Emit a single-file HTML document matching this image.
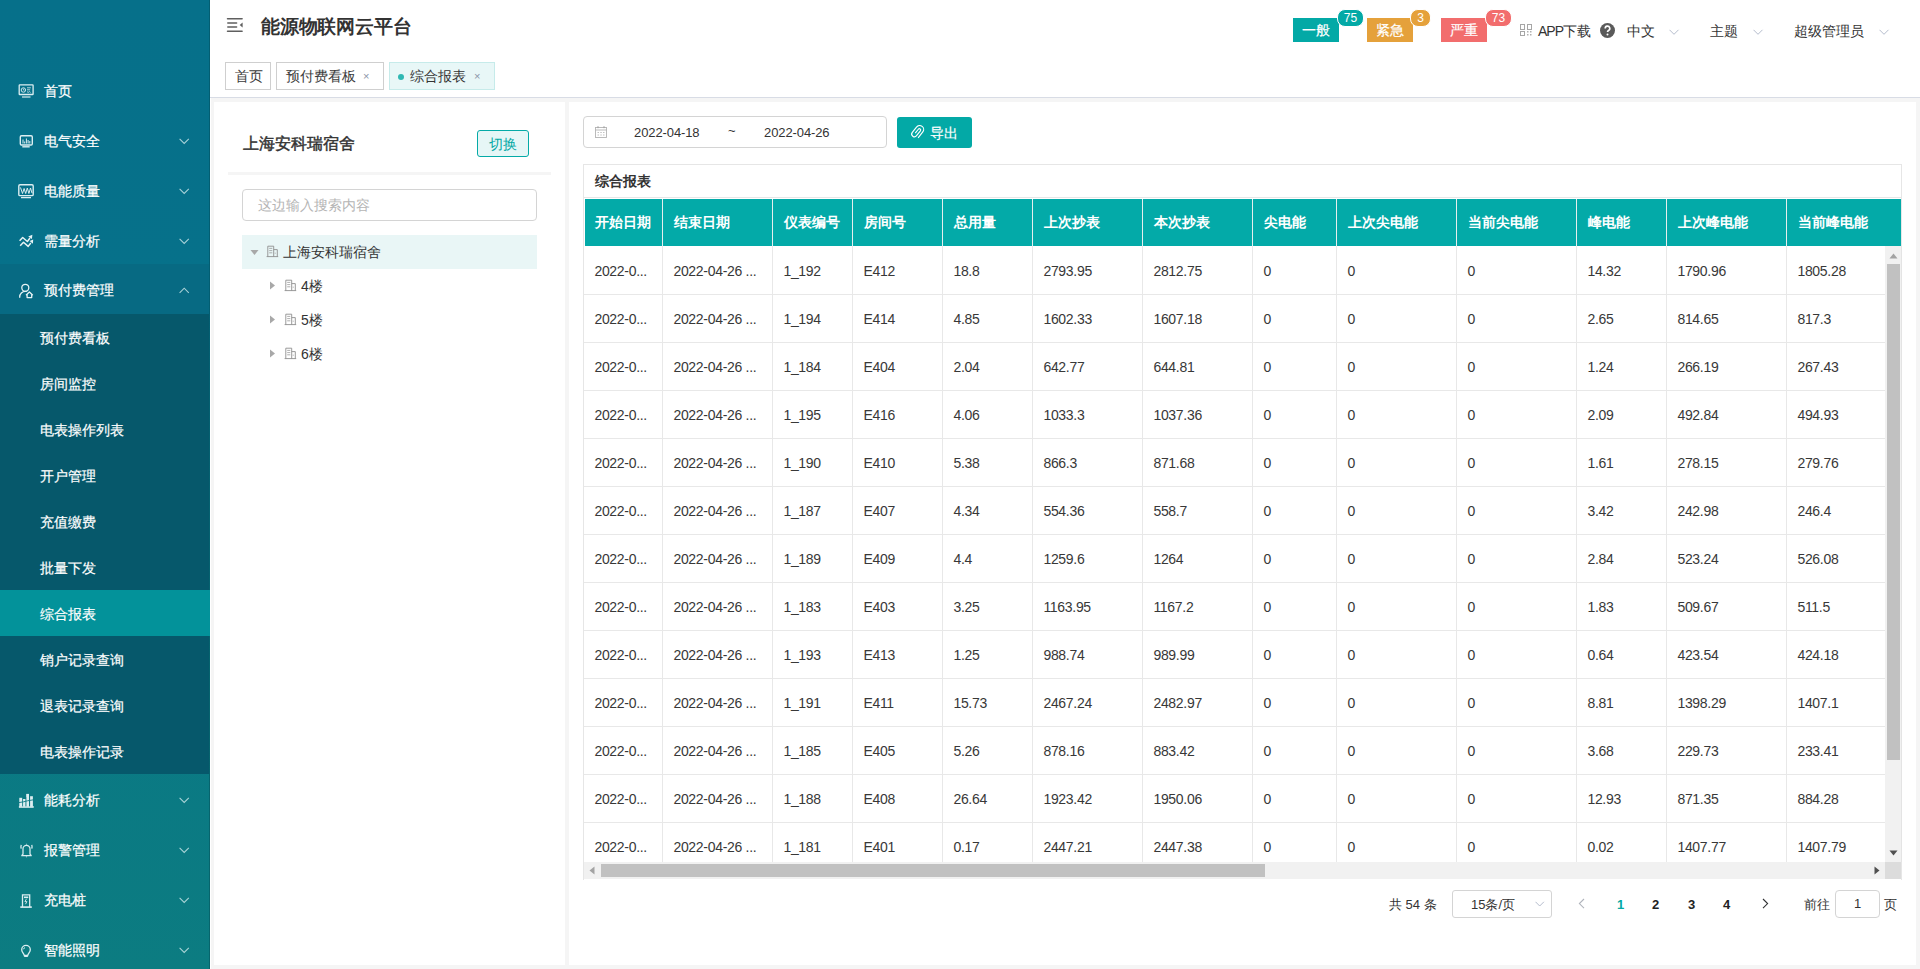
<!DOCTYPE html>
<html><head><meta charset="utf-8">
<style>
*{box-sizing:border-box;margin:0;padding:0}
html,body{width:1920px;height:969px;overflow:hidden}
body{position:relative;background:#f5f5f5;font-family:"Liberation Sans",sans-serif;font-size:14px;color:#333}
.a{position:absolute}
#sb{position:absolute;left:0;top:0;width:210px;height:969px;background:linear-gradient(180deg,#06708a 0%,#06718a 30%,#0a7984 75%,#0c7c81 100%);overflow:hidden}
#sb .edge{position:absolute;left:209px;top:0;width:1px;height:969px;background:rgba(0,60,70,.35)}
.mi{position:absolute;left:0;width:209px;height:50px;color:#fff;font-size:14px}
.mi .t{position:absolute;left:44px;top:1px;line-height:50px;white-space:nowrap;-webkit-text-stroke:0.2px #fff}
.mi svg{position:absolute;left:0;top:0}
.sub{position:absolute;left:0;top:314px;width:209px;height:460px;background:#06586b}
.si{position:absolute;left:0;width:209px;height:46px;color:#fff;font-size:14px}
.si .t{position:absolute;left:40px;top:1px;line-height:46px;white-space:nowrap;-webkit-text-stroke:0.2px #fff}
#hd{position:absolute;left:210px;top:0;width:1710px;height:98px;background:#fff;border-bottom:1px solid #d8dce5}
#wst{position:absolute;left:210px;top:98px;width:1px;height:871px;background:#fff}
#lp{position:absolute;left:214px;top:102px;width:351px;height:863px;background:#fff}
#rp{position:absolute;left:569px;top:102px;width:1347px;height:863px;background:#fff}
.tab{position:absolute;top:62px;height:28px;border:1px solid #cfcfcf;background:#fff;color:#3a3a3a;font-size:14px;line-height:26px;white-space:nowrap}
.tab .x{position:absolute;top:0;font-size:11px;color:#8a96a8}
.btn3{position:absolute;top:18px;width:46px;height:24px;color:#fff;font-size:14px;line-height:25px;text-align:center;-webkit-text-stroke:0.2px #fff}
.bdg{position:absolute;top:9px;height:18px;border-radius:8px;border:1px solid #fff;color:#fff;font-size:12px;line-height:16px;text-align:center}
.hi{position:absolute;top:19px;height:24px;line-height:24px;font-size:14px;color:#333;white-space:nowrap}
.thd{position:absolute;background:#03aaa8;overflow:hidden}
.th{position:absolute;top:0;height:47px;line-height:47px;padding-left:11px;color:#fff;font-weight:bold;font-size:14px;white-space:nowrap;overflow:hidden}
.thb{position:absolute;top:0;width:1px;height:47px;background:#e6eeee}
.tbd{position:absolute;background:#fff;overflow:hidden}
.td{position:absolute;height:47px;line-height:49px;padding-left:10.4px;color:#383838;font-size:14px;white-space:nowrap;overflow:hidden;letter-spacing:-0.3px}
.trb{position:absolute;left:0;width:1301px;height:1px;background:#e8e8e8}
.tcb{position:absolute;top:0;width:1px;height:616px;background:#e8e8e8}
.pg{position:absolute;top:891px;height:28px;line-height:28px;font-size:13px;color:#333;white-space:nowrap}

</style></head><body>
<div id="sb">
  <div class="mi" style="top:65px"><svg width="40" height="50"><rect x="19.2" y="19.9" width="13.9" height="9.6" rx="0.6" fill="none" stroke="#dceef1" stroke-width="1.3"/><circle cx="23.4" cy="25" r="2.2" fill="none" stroke="#d0e8ec" stroke-width="1"/><path d="M23.4 23.6v1.5h1.1" stroke="#d0e8ec" stroke-width="0.8" fill="none"/><path d="M27 22.8h3.8M27 24.8h3.2M27 26.6l1.2 .8 1.2-.8 1.2.8" stroke="#c6e2e6" stroke-width="0.9" fill="none"/><rect x="22" y="31.3" width="8.5" height="1.4" fill="#b9dbe0"/></svg><span class="t">首页</span></div>
  <div class="mi" style="top:115px"><svg width="40" height="50"><rect x="20.3" y="20.7" width="12" height="9.3" rx="1.2" fill="none" stroke="#dceef1" stroke-width="1.4"/><path d="M23 28.5v-4M24.7 28.5v-2M26.4 28.5v-5M28.1 28.5v-3.5M29.8 28.5v-2.5" stroke="#dceef1" stroke-width="1"/><path d="M22.3 31.8h7.4" stroke="#dceef1" stroke-width="1.4"/></svg><span class="t">电气安全</span><svg style="left:179px;top:23px" width="11" height="7"><path d="M0.6 0.8l4.6 4.6 4.6-4.6" fill="none" stroke="rgba(220,240,242,.75)" stroke-width="1.1"/></svg></div>
  <div class="mi" style="top:165px"><svg width="40" height="50"><rect x="18.8" y="19.8" width="14.4" height="10.8" rx="1.2" fill="none" stroke="#dceef1" stroke-width="1.4"/><path d="M20.5 22.5l2 6 1.6-5 1.6 5 1.6-5.5 1.6 5.5 1.6-5.5 1.5 5" fill="none" stroke="#dceef1" stroke-width="1"/><path d="M21 32.6h10" stroke="#dceef1" stroke-width="1.3"/></svg><span class="t">电能质量</span><svg style="left:179px;top:23px" width="11" height="7"><path d="M0.6 0.8l4.6 4.6 4.6-4.6" fill="none" stroke="rgba(220,240,242,.75)" stroke-width="1.1"/></svg></div>
  <div class="mi" style="top:215px"><svg width="40" height="50"><g fill="none" stroke="#e6f3f5" stroke-width="1.5" stroke-linejoin="round"><path d="M19.6 25.8L22.7 22.5L27.4 26.5L30 23"/><path d="M20.2 30.8L23.5 27.3L28.2 31.4L30.8 28"/></g><path d="M32.4 19.8L28.2 21.4L31.9 24z M33.2 24.6L29.6 26.1L32.9 28.7z" fill="#e6f3f5"/></svg><span class="t">需量分析</span><svg style="left:179px;top:23px" width="11" height="7"><path d="M0.6 0.8l4.6 4.6 4.6-4.6" fill="none" stroke="rgba(220,240,242,.75)" stroke-width="1.1"/></svg></div>
  <div class="mi" style="top:264px;background:#076a83"><svg width="40" height="50"><g fill="none" stroke="#e6f3f5" stroke-width="1.3" stroke-linejoin="round"><circle cx="25.3" cy="23.8" r="3.5"/><path d="M19.7 33.7v-.8a5.6 5.6 0 0 1 5.6-5.6h1.4"/><path d="M26 31.2L29.4 28L32.8 31.2M27.1 30.4v3.2h4.6v-3.2"/></g></svg><span class="t">预付费管理</span><svg style="left:179px;top:23px" width="11" height="7"><path d="M0.6 5.8l4.6-4.6 4.6 4.6" fill="none" stroke="rgba(220,240,242,.75)" stroke-width="1.1"/></svg></div>
  <div class="sub">
    <div class="si" style="top:0"><span class="t">预付费看板</span></div>
    <div class="si" style="top:46px"><span class="t">房间监控</span></div>
    <div class="si" style="top:92px"><span class="t">电表操作列表</span></div>
    <div class="si" style="top:138px"><span class="t">开户管理</span></div>
    <div class="si" style="top:184px"><span class="t">充值缴费</span></div>
    <div class="si" style="top:230px"><span class="t">批量下发</span></div>
    <div class="si" style="top:276px;background:#03929a;width:210px;z-index:2"><span class="t">综合报表</span></div>
    <div class="si" style="top:322px"><span class="t">销户记录查询</span></div>
    <div class="si" style="top:368px"><span class="t">退表记录查询</span></div>
    <div class="si" style="top:414px"><span class="t">电表操作记录</span></div>
  </div>
  <div class="mi" style="top:774px"><svg width="40" height="50"><g fill="#dceef1"><rect x="19.3" y="23.8" width="3.1" height="8.6"/><rect x="22.9" y="25" width="2.8" height="7.4"/><rect x="26.2" y="19.9" width="2.8" height="12.5"/><rect x="30.1" y="22.2" width="2.8" height="10.2"/><rect x="18.9" y="32.1" width="14.8" height="1.7"/></g><path d="M18.8 28.6L23.5 27.8L27.5 26.8L33.5 25.8" stroke="#0a7983" stroke-width="0.9" fill="none"/><path d="M22.6 23v9.5M25.9 23v9.5M29.5 19v13.5" stroke="#0a7983" stroke-width="0.6"/></svg><span class="t">能耗分析</span><svg style="left:179px;top:23px" width="11" height="7"><path d="M0.6 0.8l4.6 4.6 4.6-4.6" fill="none" stroke="rgba(220,240,242,.75)" stroke-width="1.1"/></svg></div>
  <div class="mi" style="top:824px"><svg width="40" height="50"><g fill="none" stroke="#dceef1" stroke-width="1.25"><path d="M23 30.6V24.8a3.5 3.5 0 0 1 7 0v5.8"/><path d="M21.3 31.6h10.4M23 30.3l-1.5 1.3M30 30.3l1.5 1.3"/><path d="M21.2 20.8q-.5 1.8 0 3.8M31.8 20.8q.5 1.8 0 3.8"/></g><path d="M26.5 19.6l.7 1h-1.4z M25.6 32.4h1.8l-.9 1.2z" fill="#dceef1"/></svg><span class="t">报警管理</span><svg style="left:179px;top:23px" width="11" height="7"><path d="M0.6 0.8l4.6 4.6 4.6-4.6" fill="none" stroke="rgba(220,240,242,.75)" stroke-width="1.1"/></svg></div>
  <div class="mi" style="top:874px"><svg width="40" height="50"><g fill="none" stroke="#dceef1" stroke-width="1.3"><path d="M22.5 33v-12.2h7.2v12.2"/></g><rect x="24" y="22.5" width="4.3" height="1.6" fill="#dceef1"/><path d="M26.5 24.8l-1.6 2.8h2l-1.4 2.6" stroke="#dceef1" stroke-width="0.9" fill="none"/><rect x="20.3" y="32.3" width="11.5" height="1.6" fill="#dceef1"/></svg><span class="t">充电桩</span><svg style="left:179px;top:23px" width="11" height="7"><path d="M0.6 0.8l4.6 4.6 4.6-4.6" fill="none" stroke="rgba(220,240,242,.75)" stroke-width="1.1"/></svg></div>
  <div class="mi" style="top:924px"><svg width="40" height="50"><path d="M24.3 31.5c-.3-2-2.6-3.2-2.6-5.8a4.3 4.3 0 0 1 8.6 0c0 2.6-2.3 3.8-2.6 5.8z" fill="none" stroke="#dceef1" stroke-width="1.3"/><rect x="24.2" y="31" width="3.6" height="2" fill="#dceef1"/><path d="M23.4 25.3a2 2 0 0 1 1.6-1.6" stroke="#dceef1" stroke-width="1" fill="none"/></svg><span class="t">智能照明</span><svg style="left:179px;top:23px" width="11" height="7"><path d="M0.6 0.8l4.6 4.6 4.6-4.6" fill="none" stroke="rgba(220,240,242,.75)" stroke-width="1.1"/></svg></div>
  <div class="edge"></div>
</div>

<div id="hd">
  <svg class="a" style="left:16px;top:16px" width="20" height="18"><g stroke="#5f5f5f" stroke-width="1.5" stroke-linecap="round"><path d="M1.5 2.8h14.6M1.5 15.2h14.6M1.8 7h8.8M1.8 11h8.8"/></g><path d="M16.6 6.6v4.8l-2.9-2.4z" fill="#5f5f5f"/></svg>
  <div class="a" style="left:51px;top:11px;height:32px;line-height:32px;font-size:19px;font-weight:bold;color:#333;white-space:nowrap;letter-spacing:-0.2px">能源物联网云平台</div>
</div>
<div class="tab" style="left:225px;width:46px;padding-left:9px">首页</div>
<div class="tab" style="left:276px;width:108px;padding-left:9px">预付费看板<span class="x" style="left:86px">×</span></div>
<div class="tab" style="left:389px;width:106px;padding-left:20px;background:#e8f7f7;border-color:#c6ebea;color:#333">综合报表<span class="x" style="left:84px">×</span><span class="a" style="left:8px;top:11px;width:6px;height:6px;border-radius:3px;background:#2fb8b3"></span></div>

<div class="btn3" style="left:1293px;background:#03a9a6">一般</div>
<div class="bdg" style="left:1337px;width:27px;background:#03a9a6">75</div>
<div class="btn3" style="left:1367px;background:#e5a13b">紧急</div>
<div class="bdg" style="left:1410px;width:21px;background:#e5a13b">3</div>
<div class="btn3" style="left:1441px;background:#f26d6d">严重</div>
<div class="bdg" style="left:1485px;width:27px;background:#f26d6d">73</div>
<svg class="a" style="left:1519px;top:23px" width="14" height="14"><g fill="none" stroke="#a6a6a6" stroke-width="1"><rect x="1.5" y="1.5" width="4" height="5"/><rect x="8.5" y="1.5" width="4" height="5"/><rect x="1.5" y="8.5" width="4" height="4"/></g><g fill="#b0b0b0"><rect x="8" y="8" width="1.5" height="1.5"/><rect x="11" y="8" width="1.5" height="1.5"/><rect x="8" y="11" width="1.5" height="1.5"/><rect x="11" y="11" width="1.5" height="1.5"/></g></svg>
<div class="hi" style="left:1538px"><span style="letter-spacing:-1px">APP</span>下载</div>
<svg class="a" style="left:1599px;top:22px" width="17" height="17"><circle cx="8.5" cy="8.5" r="7.5" fill="#5a5a5a"/><path d="M6.2 6.5a2.3 2.3 0 1 1 3.3 2c-.7.4-1 .8-1 1.6" fill="none" stroke="#fff" stroke-width="1.6"/><circle cx="8.5" cy="12.5" r="1" fill="#fff"/></svg>
<div class="hi" style="left:1627px">中文</div>
<svg class="a" style="left:1669px;top:29px" width="11" height="7"><path d="M0.5 0.8l4.5 4.5 4.5-4.5" fill="none" stroke="#b4bccc" stroke-width="1"/></svg>
<div class="hi" style="left:1710px">主题</div>
<svg class="a" style="left:1753px;top:29px" width="11" height="7"><path d="M0.5 0.8l4.5 4.5 4.5-4.5" fill="none" stroke="#b4bccc" stroke-width="1"/></svg>
<div class="hi" style="left:1794px">超级管理员</div>
<svg class="a" style="left:1879px;top:29px" width="11" height="7"><path d="M0.5 0.8l4.5 4.5 4.5-4.5" fill="none" stroke="#b4bccc" stroke-width="1"/></svg>

<div id="wst"></div>
<div id="lp">
  <div class="a" style="left:29px;top:29px;height:26px;line-height:26px;font-size:16px;font-weight:normal;color:#333;white-space:nowrap;-webkit-text-stroke:0.45px #333">上海安科瑞宿舍</div>
  <div class="a" style="left:263px;top:28px;width:52px;height:27px;border:1px solid #05aaa7;border-radius:3px;background:#e6f6f6;color:#05a8a5;font-size:14px;line-height:27px;text-align:center">切换</div>
  <div class="a" style="left:14px;top:70px;width:323px;height:3px;background:#f5f5f5"></div>
  <div class="a" style="left:28px;top:87px;width:295px;height:32px;border:1px solid #d4d4d4;border-radius:4px;color:#b5b5b5;font-size:14px;line-height:30px;padding-left:15px;white-space:nowrap">这边输入搜索内容</div>
  <div class="a" style="left:28px;top:133px;width:295px;height:34px;background:#e9f6f6"></div>
  <svg class="a" style="left:36px;top:147px" width="10" height="8"><path d="M0.5 1h8l-4 5z" fill="#a8a8a8"/></svg>
  <svg class="a" style="left:52px;top:143px" width="14" height="14"><g fill="none" stroke="#8f8f8f" stroke-width="0.9"><path d="M0.6 11.6h11.6M1.8 11.6V1.2h5.9v10.4M7.7 4.6h3.6v7"/></g><g stroke="#9a9a9a" stroke-width="0.8"><path d="M3.2 3.4h3.1M3.2 5.6h3.1M3.2 7.8h3.1"/></g><path d="M9.2 7.5v1.5" stroke="#b5b5b5" stroke-width="0.8"/></svg>
  <div class="a" style="left:69px;top:133px;height:34px;line-height:34px;font-size:14px;color:#333;white-space:nowrap">上海安科瑞宿舍</div>
  <svg class="a" style="left:55px;top:179px" width="8" height="10"><path d="M1 0.5v8l5-4z" fill="#a8a8a8"/></svg>
  <svg class="a" style="left:70px;top:177px" width="14" height="14"><g fill="none" stroke="#8f8f8f" stroke-width="0.9"><path d="M0.6 11.6h11.6M1.8 11.6V1.2h5.9v10.4M7.7 4.6h3.6v7"/></g><g stroke="#9a9a9a" stroke-width="0.8"><path d="M3.2 3.4h3.1M3.2 5.6h3.1M3.2 7.8h3.1"/></g><path d="M9.2 7.5v1.5" stroke="#b5b5b5" stroke-width="0.8"/></svg>
  <div class="a" style="left:87px;top:167px;height:34px;line-height:34px;font-size:14px;color:#333;white-space:nowrap">4楼</div>
  <svg class="a" style="left:55px;top:213px" width="8" height="10"><path d="M1 0.5v8l5-4z" fill="#a8a8a8"/></svg>
  <svg class="a" style="left:70px;top:211px" width="14" height="14"><g fill="none" stroke="#8f8f8f" stroke-width="0.9"><path d="M0.6 11.6h11.6M1.8 11.6V1.2h5.9v10.4M7.7 4.6h3.6v7"/></g><g stroke="#9a9a9a" stroke-width="0.8"><path d="M3.2 3.4h3.1M3.2 5.6h3.1M3.2 7.8h3.1"/></g><path d="M9.2 7.5v1.5" stroke="#b5b5b5" stroke-width="0.8"/></svg>
  <div class="a" style="left:87px;top:201px;height:34px;line-height:34px;font-size:14px;color:#333;white-space:nowrap">5楼</div>
  <svg class="a" style="left:55px;top:247px" width="8" height="10"><path d="M1 0.5v8l5-4z" fill="#a8a8a8"/></svg>
  <svg class="a" style="left:70px;top:245px" width="14" height="14"><g fill="none" stroke="#8f8f8f" stroke-width="0.9"><path d="M0.6 11.6h11.6M1.8 11.6V1.2h5.9v10.4M7.7 4.6h3.6v7"/></g><g stroke="#9a9a9a" stroke-width="0.8"><path d="M3.2 3.4h3.1M3.2 5.6h3.1M3.2 7.8h3.1"/></g><path d="M9.2 7.5v1.5" stroke="#b5b5b5" stroke-width="0.8"/></svg>
  <div class="a" style="left:87px;top:235px;height:34px;line-height:34px;font-size:14px;color:#333;white-space:nowrap">6楼</div>
</div>

<div id="rp">
  <div class="a" style="left:14px;top:14px;width:304px;height:32px;border:1px solid #d4d4d4;border-radius:4px"></div>
  <svg class="a" style="left:25px;top:23px" width="14" height="14"><g fill="none" stroke="#b3b3b3" stroke-width="0.9"><rect x="1.5" y="2.5" width="11" height="10"/><path d="M1.5 5h11"/></g><path d="M4 1.2v2M10 1.2v2" stroke="#9a9a9a" stroke-width="0.9"/><g fill="#c2c2c2"><rect x="3.5" y="7" width="1.5" height="1"/><rect x="6.3" y="7" width="1.5" height="1"/><rect x="9" y="7" width="1.5" height="1"/><rect x="3.5" y="9.5" width="1.5" height="1"/><rect x="6.3" y="9.5" width="1.5" height="1"/><rect x="9" y="9.5" width="1.5" height="1"/></g></svg>
  <div class="a" style="left:65px;top:15px;line-height:32px;font-size:13px;color:#333;letter-spacing:-0.1px">2022-04-18</div>
  <div class="a" style="left:159px;top:14px;line-height:30px;font-size:13px;color:#333">~</div>
  <div class="a" style="left:195px;top:15px;line-height:32px;font-size:13px;color:#333;letter-spacing:-0.1px">2022-04-26</div>
  <div class="a" style="left:328px;top:15px;width:75px;height:31px;border-radius:3px;background:#03a9a6"></div>
  <svg class="a" style="left:340px;top:22px" width="16" height="16"><g transform="translate(8.2,8.8) rotate(-52)" fill="none" stroke="#fff" stroke-width="1.15"><path d="M-1.5 -1.3h5a1.3 1.3 0 0 1 0 2.6h-6.2a2.7 2.7 0 0 1 0-5.4h6.8a4 4 0 0 1 0 8h-7.6"/></g></svg>
  <div class="a" style="left:361px;top:16px;line-height:31px;font-size:14px;color:#fff;-webkit-text-stroke:0.2px #fff">导出</div>
  <!-- table frame -->
  <div class="a" style="left:14px;top:62px;width:1319px;height:716px;border:1px solid #e6e6e6;border-bottom:none"></div>
  <div class="a" style="left:26px;top:63px;line-height:33px;font-size:14px;font-weight:bold;color:#333">综合报表</div>
  <div class="a" style="left:15px;top:95px;width:1317px;height:1px;background:#e6e6e6"></div>
</div>
<div class="thd" style="left:585px;top:199px;width:1316px;height:47px">
<div class="th" style="left:-1px;width:78px">开始日期</div>
<div class="thb" style="left:77px"></div>
<div class="th" style="left:78px;width:109px">结束日期</div>
<div class="thb" style="left:187px"></div>
<div class="th" style="left:188px;width:79px">仪表编号</div>
<div class="thb" style="left:267px"></div>
<div class="th" style="left:268px;width:89px">房间号</div>
<div class="thb" style="left:357px"></div>
<div class="th" style="left:358px;width:89px">总用量</div>
<div class="thb" style="left:447px"></div>
<div class="th" style="left:448px;width:109px">上次抄表</div>
<div class="thb" style="left:557px"></div>
<div class="th" style="left:558px;width:109px">本次抄表</div>
<div class="thb" style="left:667px"></div>
<div class="th" style="left:668px;width:83px">尖电能</div>
<div class="thb" style="left:751px"></div>
<div class="th" style="left:752px;width:119px">上次尖电能</div>
<div class="thb" style="left:871px"></div>
<div class="th" style="left:872px;width:119px">当前尖电能</div>
<div class="thb" style="left:991px"></div>
<div class="th" style="left:992px;width:89px">峰电能</div>
<div class="thb" style="left:1081px"></div>
<div class="th" style="left:1082px;width:119px">上次峰电能</div>
<div class="thb" style="left:1201px"></div>
<div class="th" style="left:1202px;width:119px">当前峰电能</div>
</div>
<div class="tbd" style="left:584px;top:246px;width:1301px;height:616px">
<div class="td" style="left:0px;top:1px;width:78px">2022-0...</div>
<div class="td" style="left:79px;top:1px;width:109px">2022-04-26 ...</div>
<div class="td" style="left:189px;top:1px;width:79px">1_192</div>
<div class="td" style="left:269px;top:1px;width:89px">E412</div>
<div class="td" style="left:359px;top:1px;width:89px">18.8</div>
<div class="td" style="left:449px;top:1px;width:109px">2793.95</div>
<div class="td" style="left:559px;top:1px;width:109px">2812.75</div>
<div class="td" style="left:669px;top:1px;width:83px">0</div>
<div class="td" style="left:753px;top:1px;width:119px">0</div>
<div class="td" style="left:873px;top:1px;width:119px">0</div>
<div class="td" style="left:993px;top:1px;width:89px">14.32</div>
<div class="td" style="left:1083px;top:1px;width:119px">1790.96</div>
<div class="td" style="left:1203px;top:1px;width:119px">1805.28</div>
<div class="trb" style="top:48px"></div>
<div class="td" style="left:0px;top:49px;width:78px">2022-0...</div>
<div class="td" style="left:79px;top:49px;width:109px">2022-04-26 ...</div>
<div class="td" style="left:189px;top:49px;width:79px">1_194</div>
<div class="td" style="left:269px;top:49px;width:89px">E414</div>
<div class="td" style="left:359px;top:49px;width:89px">4.85</div>
<div class="td" style="left:449px;top:49px;width:109px">1602.33</div>
<div class="td" style="left:559px;top:49px;width:109px">1607.18</div>
<div class="td" style="left:669px;top:49px;width:83px">0</div>
<div class="td" style="left:753px;top:49px;width:119px">0</div>
<div class="td" style="left:873px;top:49px;width:119px">0</div>
<div class="td" style="left:993px;top:49px;width:89px">2.65</div>
<div class="td" style="left:1083px;top:49px;width:119px">814.65</div>
<div class="td" style="left:1203px;top:49px;width:119px">817.3</div>
<div class="trb" style="top:96px"></div>
<div class="td" style="left:0px;top:97px;width:78px">2022-0...</div>
<div class="td" style="left:79px;top:97px;width:109px">2022-04-26 ...</div>
<div class="td" style="left:189px;top:97px;width:79px">1_184</div>
<div class="td" style="left:269px;top:97px;width:89px">E404</div>
<div class="td" style="left:359px;top:97px;width:89px">2.04</div>
<div class="td" style="left:449px;top:97px;width:109px">642.77</div>
<div class="td" style="left:559px;top:97px;width:109px">644.81</div>
<div class="td" style="left:669px;top:97px;width:83px">0</div>
<div class="td" style="left:753px;top:97px;width:119px">0</div>
<div class="td" style="left:873px;top:97px;width:119px">0</div>
<div class="td" style="left:993px;top:97px;width:89px">1.24</div>
<div class="td" style="left:1083px;top:97px;width:119px">266.19</div>
<div class="td" style="left:1203px;top:97px;width:119px">267.43</div>
<div class="trb" style="top:144px"></div>
<div class="td" style="left:0px;top:145px;width:78px">2022-0...</div>
<div class="td" style="left:79px;top:145px;width:109px">2022-04-26 ...</div>
<div class="td" style="left:189px;top:145px;width:79px">1_195</div>
<div class="td" style="left:269px;top:145px;width:89px">E416</div>
<div class="td" style="left:359px;top:145px;width:89px">4.06</div>
<div class="td" style="left:449px;top:145px;width:109px">1033.3</div>
<div class="td" style="left:559px;top:145px;width:109px">1037.36</div>
<div class="td" style="left:669px;top:145px;width:83px">0</div>
<div class="td" style="left:753px;top:145px;width:119px">0</div>
<div class="td" style="left:873px;top:145px;width:119px">0</div>
<div class="td" style="left:993px;top:145px;width:89px">2.09</div>
<div class="td" style="left:1083px;top:145px;width:119px">492.84</div>
<div class="td" style="left:1203px;top:145px;width:119px">494.93</div>
<div class="trb" style="top:192px"></div>
<div class="td" style="left:0px;top:193px;width:78px">2022-0...</div>
<div class="td" style="left:79px;top:193px;width:109px">2022-04-26 ...</div>
<div class="td" style="left:189px;top:193px;width:79px">1_190</div>
<div class="td" style="left:269px;top:193px;width:89px">E410</div>
<div class="td" style="left:359px;top:193px;width:89px">5.38</div>
<div class="td" style="left:449px;top:193px;width:109px">866.3</div>
<div class="td" style="left:559px;top:193px;width:109px">871.68</div>
<div class="td" style="left:669px;top:193px;width:83px">0</div>
<div class="td" style="left:753px;top:193px;width:119px">0</div>
<div class="td" style="left:873px;top:193px;width:119px">0</div>
<div class="td" style="left:993px;top:193px;width:89px">1.61</div>
<div class="td" style="left:1083px;top:193px;width:119px">278.15</div>
<div class="td" style="left:1203px;top:193px;width:119px">279.76</div>
<div class="trb" style="top:240px"></div>
<div class="td" style="left:0px;top:241px;width:78px">2022-0...</div>
<div class="td" style="left:79px;top:241px;width:109px">2022-04-26 ...</div>
<div class="td" style="left:189px;top:241px;width:79px">1_187</div>
<div class="td" style="left:269px;top:241px;width:89px">E407</div>
<div class="td" style="left:359px;top:241px;width:89px">4.34</div>
<div class="td" style="left:449px;top:241px;width:109px">554.36</div>
<div class="td" style="left:559px;top:241px;width:109px">558.7</div>
<div class="td" style="left:669px;top:241px;width:83px">0</div>
<div class="td" style="left:753px;top:241px;width:119px">0</div>
<div class="td" style="left:873px;top:241px;width:119px">0</div>
<div class="td" style="left:993px;top:241px;width:89px">3.42</div>
<div class="td" style="left:1083px;top:241px;width:119px">242.98</div>
<div class="td" style="left:1203px;top:241px;width:119px">246.4</div>
<div class="trb" style="top:288px"></div>
<div class="td" style="left:0px;top:289px;width:78px">2022-0...</div>
<div class="td" style="left:79px;top:289px;width:109px">2022-04-26 ...</div>
<div class="td" style="left:189px;top:289px;width:79px">1_189</div>
<div class="td" style="left:269px;top:289px;width:89px">E409</div>
<div class="td" style="left:359px;top:289px;width:89px">4.4</div>
<div class="td" style="left:449px;top:289px;width:109px">1259.6</div>
<div class="td" style="left:559px;top:289px;width:109px">1264</div>
<div class="td" style="left:669px;top:289px;width:83px">0</div>
<div class="td" style="left:753px;top:289px;width:119px">0</div>
<div class="td" style="left:873px;top:289px;width:119px">0</div>
<div class="td" style="left:993px;top:289px;width:89px">2.84</div>
<div class="td" style="left:1083px;top:289px;width:119px">523.24</div>
<div class="td" style="left:1203px;top:289px;width:119px">526.08</div>
<div class="trb" style="top:336px"></div>
<div class="td" style="left:0px;top:337px;width:78px">2022-0...</div>
<div class="td" style="left:79px;top:337px;width:109px">2022-04-26 ...</div>
<div class="td" style="left:189px;top:337px;width:79px">1_183</div>
<div class="td" style="left:269px;top:337px;width:89px">E403</div>
<div class="td" style="left:359px;top:337px;width:89px">3.25</div>
<div class="td" style="left:449px;top:337px;width:109px">1163.95</div>
<div class="td" style="left:559px;top:337px;width:109px">1167.2</div>
<div class="td" style="left:669px;top:337px;width:83px">0</div>
<div class="td" style="left:753px;top:337px;width:119px">0</div>
<div class="td" style="left:873px;top:337px;width:119px">0</div>
<div class="td" style="left:993px;top:337px;width:89px">1.83</div>
<div class="td" style="left:1083px;top:337px;width:119px">509.67</div>
<div class="td" style="left:1203px;top:337px;width:119px">511.5</div>
<div class="trb" style="top:384px"></div>
<div class="td" style="left:0px;top:385px;width:78px">2022-0...</div>
<div class="td" style="left:79px;top:385px;width:109px">2022-04-26 ...</div>
<div class="td" style="left:189px;top:385px;width:79px">1_193</div>
<div class="td" style="left:269px;top:385px;width:89px">E413</div>
<div class="td" style="left:359px;top:385px;width:89px">1.25</div>
<div class="td" style="left:449px;top:385px;width:109px">988.74</div>
<div class="td" style="left:559px;top:385px;width:109px">989.99</div>
<div class="td" style="left:669px;top:385px;width:83px">0</div>
<div class="td" style="left:753px;top:385px;width:119px">0</div>
<div class="td" style="left:873px;top:385px;width:119px">0</div>
<div class="td" style="left:993px;top:385px;width:89px">0.64</div>
<div class="td" style="left:1083px;top:385px;width:119px">423.54</div>
<div class="td" style="left:1203px;top:385px;width:119px">424.18</div>
<div class="trb" style="top:432px"></div>
<div class="td" style="left:0px;top:433px;width:78px">2022-0...</div>
<div class="td" style="left:79px;top:433px;width:109px">2022-04-26 ...</div>
<div class="td" style="left:189px;top:433px;width:79px">1_191</div>
<div class="td" style="left:269px;top:433px;width:89px">E411</div>
<div class="td" style="left:359px;top:433px;width:89px">15.73</div>
<div class="td" style="left:449px;top:433px;width:109px">2467.24</div>
<div class="td" style="left:559px;top:433px;width:109px">2482.97</div>
<div class="td" style="left:669px;top:433px;width:83px">0</div>
<div class="td" style="left:753px;top:433px;width:119px">0</div>
<div class="td" style="left:873px;top:433px;width:119px">0</div>
<div class="td" style="left:993px;top:433px;width:89px">8.81</div>
<div class="td" style="left:1083px;top:433px;width:119px">1398.29</div>
<div class="td" style="left:1203px;top:433px;width:119px">1407.1</div>
<div class="trb" style="top:480px"></div>
<div class="td" style="left:0px;top:481px;width:78px">2022-0...</div>
<div class="td" style="left:79px;top:481px;width:109px">2022-04-26 ...</div>
<div class="td" style="left:189px;top:481px;width:79px">1_185</div>
<div class="td" style="left:269px;top:481px;width:89px">E405</div>
<div class="td" style="left:359px;top:481px;width:89px">5.26</div>
<div class="td" style="left:449px;top:481px;width:109px">878.16</div>
<div class="td" style="left:559px;top:481px;width:109px">883.42</div>
<div class="td" style="left:669px;top:481px;width:83px">0</div>
<div class="td" style="left:753px;top:481px;width:119px">0</div>
<div class="td" style="left:873px;top:481px;width:119px">0</div>
<div class="td" style="left:993px;top:481px;width:89px">3.68</div>
<div class="td" style="left:1083px;top:481px;width:119px">229.73</div>
<div class="td" style="left:1203px;top:481px;width:119px">233.41</div>
<div class="trb" style="top:528px"></div>
<div class="td" style="left:0px;top:529px;width:78px">2022-0...</div>
<div class="td" style="left:79px;top:529px;width:109px">2022-04-26 ...</div>
<div class="td" style="left:189px;top:529px;width:79px">1_188</div>
<div class="td" style="left:269px;top:529px;width:89px">E408</div>
<div class="td" style="left:359px;top:529px;width:89px">26.64</div>
<div class="td" style="left:449px;top:529px;width:109px">1923.42</div>
<div class="td" style="left:559px;top:529px;width:109px">1950.06</div>
<div class="td" style="left:669px;top:529px;width:83px">0</div>
<div class="td" style="left:753px;top:529px;width:119px">0</div>
<div class="td" style="left:873px;top:529px;width:119px">0</div>
<div class="td" style="left:993px;top:529px;width:89px">12.93</div>
<div class="td" style="left:1083px;top:529px;width:119px">871.35</div>
<div class="td" style="left:1203px;top:529px;width:119px">884.28</div>
<div class="trb" style="top:576px"></div>
<div class="td" style="left:0px;top:577px;width:78px">2022-0...</div>
<div class="td" style="left:79px;top:577px;width:109px">2022-04-26 ...</div>
<div class="td" style="left:189px;top:577px;width:79px">1_181</div>
<div class="td" style="left:269px;top:577px;width:89px">E401</div>
<div class="td" style="left:359px;top:577px;width:89px">0.17</div>
<div class="td" style="left:449px;top:577px;width:109px">2447.21</div>
<div class="td" style="left:559px;top:577px;width:109px">2447.38</div>
<div class="td" style="left:669px;top:577px;width:83px">0</div>
<div class="td" style="left:753px;top:577px;width:119px">0</div>
<div class="td" style="left:873px;top:577px;width:119px">0</div>
<div class="td" style="left:993px;top:577px;width:89px">0.02</div>
<div class="td" style="left:1083px;top:577px;width:119px">1407.77</div>
<div class="td" style="left:1203px;top:577px;width:119px">1407.79</div>
<div class="trb" style="top:624px"></div>
<div class="tcb" style="left:78px"></div>
<div class="tcb" style="left:188px"></div>
<div class="tcb" style="left:268px"></div>
<div class="tcb" style="left:358px"></div>
<div class="tcb" style="left:448px"></div>
<div class="tcb" style="left:558px"></div>
<div class="tcb" style="left:668px"></div>
<div class="tcb" style="left:752px"></div>
<div class="tcb" style="left:872px"></div>
<div class="tcb" style="left:992px"></div>
<div class="tcb" style="left:1082px"></div>
<div class="tcb" style="left:1202px"></div>
<div class="tcb" style="left:1322px"></div>
</div>
<!-- scrollbars -->
<div class="a" style="left:1885px;top:246px;width:17px;height:616px;background:#f1f1f1;border-right:1px solid #e4e4e4"></div>
<svg class="a" style="left:1889px;top:253px" width="9" height="6"><path d="M0.5 5.5h8l-4-5z" fill="#a3a3a3"/></svg>
<div class="a" style="left:1887px;top:264px;width:13px;height:496px;background:#c1c1c1"></div>
<svg class="a" style="left:1889px;top:850px" width="9" height="6"><path d="M0.5 0.5h8l-4 5z" fill="#505050"/></svg>
<div class="a" style="left:584px;top:862px;width:1301px;height:17px;background:#f1f1f1"></div>
<div class="a" style="left:601px;top:864px;width:664px;height:13px;background:#c1c1c1"></div>
<svg class="a" style="left:589px;top:866px" width="6" height="9"><path d="M5.5 0.5v8l-5-4z" fill="#a3a3a3"/></svg>
<svg class="a" style="left:1874px;top:866px" width="6" height="9"><path d="M0.5 0.5v8l5-4z" fill="#505050"/></svg>
<div class="a" style="left:1885px;top:862px;width:16px;height:17px;background:#dcdcdc"></div>
<!-- pagination -->
<div class="pg" style="left:1389px">共 54 条</div>
<div class="a" style="left:1452px;top:890px;width:100px;height:28px;border:1px solid #d4d4d4;border-radius:3px"></div>
<div class="pg" style="left:1471px">15条/页</div>
<svg class="a" style="left:1535px;top:901px" width="10" height="7"><path d="M0.5 0.8l4.2 4.2 4.2-4.2" fill="none" stroke="#b4bccc" stroke-width="1"/></svg>
<svg class="a" style="left:1577px;top:898px" width="9" height="12"><path d="M7 1l-4.6 4.6 4.6 4.6" fill="none" stroke="#b0b4bc" stroke-width="1.1"/></svg>
<div class="pg" style="left:1617px;font-weight:bold;color:#03a9a6">1</div>
<div class="pg" style="left:1652px;font-weight:bold;color:#222">2</div>
<div class="pg" style="left:1688px;font-weight:bold;color:#222">3</div>
<div class="pg" style="left:1723px;font-weight:bold;color:#222">4</div>
<svg class="a" style="left:1761px;top:898px" width="9" height="12"><path d="M2 1l4.6 4.6-4.6 4.6" fill="none" stroke="#303133" stroke-width="1.1"/></svg>
<div class="pg" style="left:1804px">前往</div>
<div class="a" style="left:1835px;top:890px;width:45px;height:28px;border:1px solid #d4d4d4;border-radius:4px;text-align:center;line-height:26px;font-size:13px;color:#333">1</div>
<div class="pg" style="left:1884px">页</div>

</body></html>
